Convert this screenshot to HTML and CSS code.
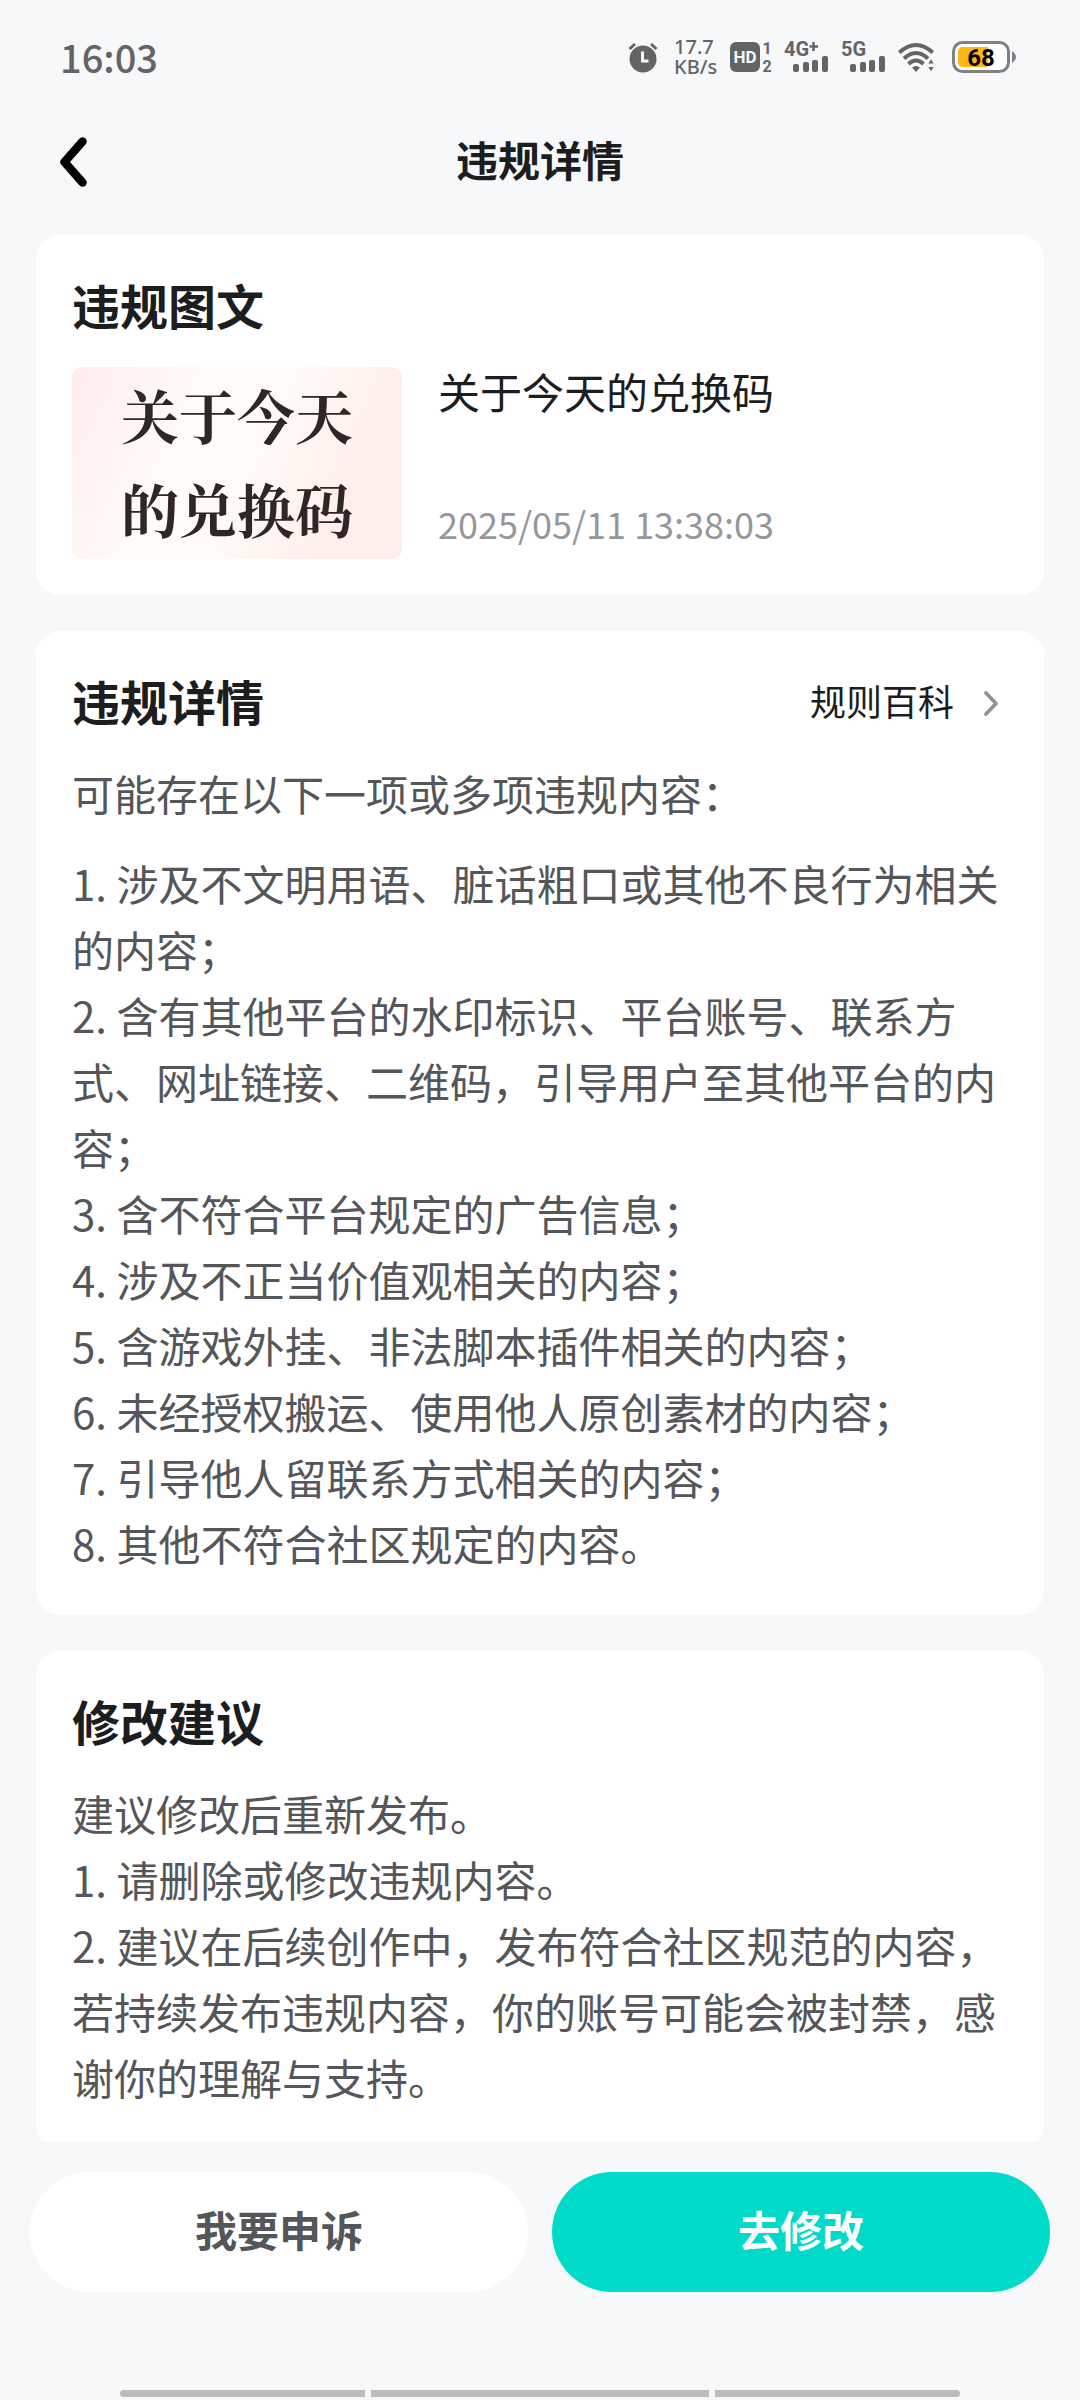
FILE: index.html
```
<!DOCTYPE html>
<html lang="zh-CN">
  <head>
    <meta charset="UTF-8" />
    <meta name="viewport" content="width=device-width, initial-scale=1.0" />
    <title>违规详情</title>
    <link rel="stylesheet" href="styles.css">
  </head>
  <body>
    <!-- 状态栏 -->
    <div class="status-bar">
      <span class="time">16:03</span>
      <div class="status-icons">
        <svg width="34" height="32" viewBox="0 0 34 32">
          <circle cx="15" cy="18" r="13.5" fill="#636466" />
          <path d="M1.500 8L7 3M28.500 8L23 3" stroke="#636466" stroke-width="3" />
          <path d="M14.500 10.500V20H20.500" fill="none" stroke="#f7f8fa" stroke-width="3" />
        </svg>
        <div class="speed">
          <span>17.7</span>
          <span>KB/s</span>
        </div>
        <svg class="glyph" width="42" height="32" viewBox="0 0 42 32">
          <rect x="0" y="1" width="30" height="30" rx="6" fill="#636466" />
          <text class="hd" x="15" y="22" font-size="17" text-anchor="middle">HD</text>
          <text x="37" y="13" font-size="16" text-anchor="middle">1</text>
          <text x="37" y="31" font-size="16" text-anchor="middle">2</text>
        </svg>
        <svg class="glyph" width="45" height="32" viewBox="0 0 45 32">
          <text x="0" y="15" font-size="20">4G</text>
          <path d="M29.500 1V10M25.500 5.500H34" stroke="#636466" stroke-width="2.500" />
          <g fill="#636466">
            <rect x="9" y="23" width="6" height="8" rx="2" />
            <rect x="19" y="21" width="6" height="10" rx="2" />
            <rect x="28" y="19" width="6" height="12" rx="2" />
            <rect x="38" y="15" width="6" height="16" rx="2" />
          </g>
        </svg>
        <svg class="glyph" width="45" height="32" viewBox="0 0 45 32">
          <text x="0" y="15" font-size="20">5G</text>
          <g fill="#636466">
            <rect x="9" y="23" width="6" height="8" rx="2" />
            <rect x="19" y="21" width="6" height="10" rx="2" />
            <rect x="28" y="19" width="6" height="12" rx="2" />
            <rect x="38" y="15" width="6" height="16" rx="2" />
          </g>
        </svg>
        <svg width="42" height="32" viewBox="0 0 42 32">
          <g fill="none" stroke="#636466" stroke-width="4">
            <path d="M1.300 11.500Q18 -3.500 34.700 11.500" />
            <path d="M6 17.500Q18 6.500 30 17.500" />
            <path d="M10.500 23Q18 16 25.500 23" />
          </g>
          <path d="M14 26.500Q18 23.500 22 26.500L18 31Z" fill="#636466" />
          <path d="M29.500 23L33 17.500L36.500 23ZM29.500 25.500L33 31L36.500 25.500Z" fill="#636466" stroke="#f7f8fa" stroke-width="1" />
        </svg>
        <svg class="glyph" width="64" height="32" viewBox="0 0 64 32">
          <rect x="1.500" y="1.500" width="55" height="29" rx="9" fill="#fff" stroke="#808184" stroke-width="3" />
          <path d="M11 6H36V26H11Q6 26 6 21V11Q6 6 11 6Z" fill="#fdb813" />
          <path d="M60 10Q64 13 64 16Q64 19 60 22Z" fill="#808184" />
          <text class="level" x="29" y="25" font-size="24" text-anchor="middle">68</text>
        </svg>
      </div>
    </div>

    <!-- 标题栏 -->
    <header class="nav">
      <button class="back" type="button" aria-label="返回">
        <svg width="32" height="58" viewBox="0 0 32 58">
          <path d="M22.500 11.500L4.500 32L22.500 52.500" fill="none" stroke="#000" stroke-width="8.500" stroke-linecap="round" stroke-linejoin="round" />
        </svg>
      </button>
      <h1>违规详情</h1>
    </header>

    <main class="content">
      <section class="card">
        <h2>违规图文</h2>
        <div class="post">
          <div class="cover">关于今天<br />的兑换码</div>
          <div class="post-info">
            <p class="post-title">关于今天的兑换码</p>
            <time class="post-time">2025/05/11 13:38:03</time>
          </div>
        </div>
      </section>

      <section class="card">
        <div class="card-head">
          <h2>违规详情</h2>
          <a class="more" href="#">
            规则百科
            <svg width="36" height="36" viewBox="0 0 36 36">
              <path d="M14 11L24 21.500L14 32" fill="none" stroke="#919497" stroke-width="3.800" stroke-linecap="round" stroke-linejoin="round" />
            </svg>
          </a>
        </div>
        <p class="intro">可能存在以下一项或多项违规内容：</p>
        <ul class="rules">
          <li>1. 涉及不文明用语、脏话粗口或其他不良行为相关的内容；</li>
          <li>2. 含有其他平台的水印标识、平台账号、联系方式、网址链接、二维码，引导用户至其他平台的内容；</li>
          <li>3. 含不符合平台规定的广告信息；</li>
          <li>4. 涉及不正当价值观相关的内容；</li>
          <li>5. 含游戏外挂、非法脚本插件相关的内容；</li>
          <li>6. 未经授权搬运、使用他人原创素材的内容；</li>
          <li>7. 引导他人留联系方式相关的内容；</li>
          <li>8. 其他不符合社区规定的内容。</li>
        </ul>
      </section>

      <section class="card">
        <h2>修改建议</h2>
        <p>建议修改后重新发布。</p>
        <ul class="rules">
          <li>1. 请删除或修改违规内容。</li>
          <li>2. 建议在后续创作中，发布符合社区规范的内容，若持续发布违规内容，你的账号可能会被封禁，感谢你的理解与支持。</li>
        </ul>
      </section>
    </main>

    <!-- 底部按钮 -->
    <footer class="footer">
      <div class="actions">
        <button class="btn" type="button">我要申诉</button>
        <button class="btn primary" type="button">去修改</button>
      </div>
      <div class="gesture-bar">
        <span></span>
        <span class="middle"></span>
        <span></span>
      </div>
    </footer>
  </body>
</html>
```
FILE: styles.css
```
* {
  margin: 0;
  padding: 0;
  box-sizing: border-box;
}
body {
  height: 100vh;
  display: flex;
  flex-direction: column;
  background-color: #f7f8fa;
  color: #545659;
  font-family: "Noto Sans CJK SC", sans-serif;
  font-size: 42px;
  line-height: 66px;
}
ul {
  list-style: none;
}
svg {
  display: block;
}
button {
  border: none;
  background: none;
  font: inherit;
  cursor: pointer;
}
/* 
  状态栏
*/
.status-bar {
  flex: none;
  height: 110px;
  padding: 4px 64px 0 60px;
  display: flex;
  align-items: center;
  justify-content: space-between;
  color: #636466;
}
.time {
  font-size: 38px;
  font-weight: 500;
}
.status-icons {
  display: flex;
  align-items: center;
  gap: 12px;
}
.speed {
  width: 44px;
  display: flex;
  flex-direction: column;
  font-family: "Noto Sans", sans-serif;
  font-size: 20px;
  font-weight: 500;
  line-height: 20px;
}
.glyph {
  overflow: visible;
  font-family: Roboto, sans-serif;
  font-weight: bold;
  fill: #636466;
}
.hd {
  fill: #f7f8fa;
}
.level {
  fill: #000;
}
/* 
  标题栏
*/
.nav {
  flex: none;
  height: 98px;
  position: relative;
  display: flex;
  align-items: center;
  justify-content: center;
}
.nav h1 {
  font-size: 42px;
  color: #1c1d1f;
}
.back {
  position: absolute;
  left: 60px;
}
/* 
  卡片
*/
.content {
  flex: 1;
  min-height: 0;
  overflow: hidden;
  padding: 27px 36px 0;
}
.card {
  padding: 33px 36px 36px;
  margin-bottom: 36px;
  border-radius: 24px;
  background-color: #fff;
}
.card h2 {
  margin-bottom: 24px;
  font-size: 48px;
  line-height: 72px;
  color: #1c1d1f;
}
.card-head {
  display: flex;
  justify-content: space-between;
}
.more {
  height: 72px;
  display: flex;
  align-items: center;
  gap: 18px;
  font-size: 36px;
  color: #1c1d1f;
  text-decoration: none;
}
.intro {
  margin-bottom: 24px;
}
.rules {
  padding-bottom: 3px;
}
.post {
  display: flex;
  gap: 36px;
  padding-top: 3px;
}
.cover {
  flex: none;
  width: 330px;
  height: 192px;
  border-radius: 10px;
  background: linear-gradient(115deg, #ffecec 0%, #fffcf8 35%, #fffaf6 55%, #ffeeec 80%, #ffefeb 100%);
  color: #302625;
  font-family: "Noto Serif CJK SC", "Noto Sans CJK SC", serif;
  font-size: 58px;
  font-weight: bold;
  line-height: 94px;
  text-align: center;
}
.post-info {
  flex: 1;
  display: flex;
  flex-direction: column;
  justify-content: space-between;
}
.post-title {
  line-height: 48px;
  color: #1c1d1f;
}
.post-time {
  font-size: 36px;
  line-height: 72px;
  color: #95979a;
}
/* 
  底部
*/
.footer {
  flex: none;
}
.actions {
  display: flex;
  gap: 24px;
  padding: 30px 30px 98px;
}
.btn {
  flex: 1;
  height: 120px;
  padding-bottom: 6px;
  border-radius: 60px;
  background-color: #fff;
  color: #545659;
  font-weight: bold;
}
.btn.primary {
  background-color: #00dbc9;
  color: #fff;
}
.gesture-bar {
  display: flex;
  gap: 6px;
  padding: 0 120px 3px;
}
.gesture-bar span {
  flex: 245;
  height: 7px;
  background-color: #bbbcbe;
}
.gesture-bar .middle {
  flex: 338;
}
.gesture-bar span:first-child {
  border-radius: 4px 0 0 4px;
}
.gesture-bar span:last-child {
  border-radius: 0 4px 4px 0;
}
```
